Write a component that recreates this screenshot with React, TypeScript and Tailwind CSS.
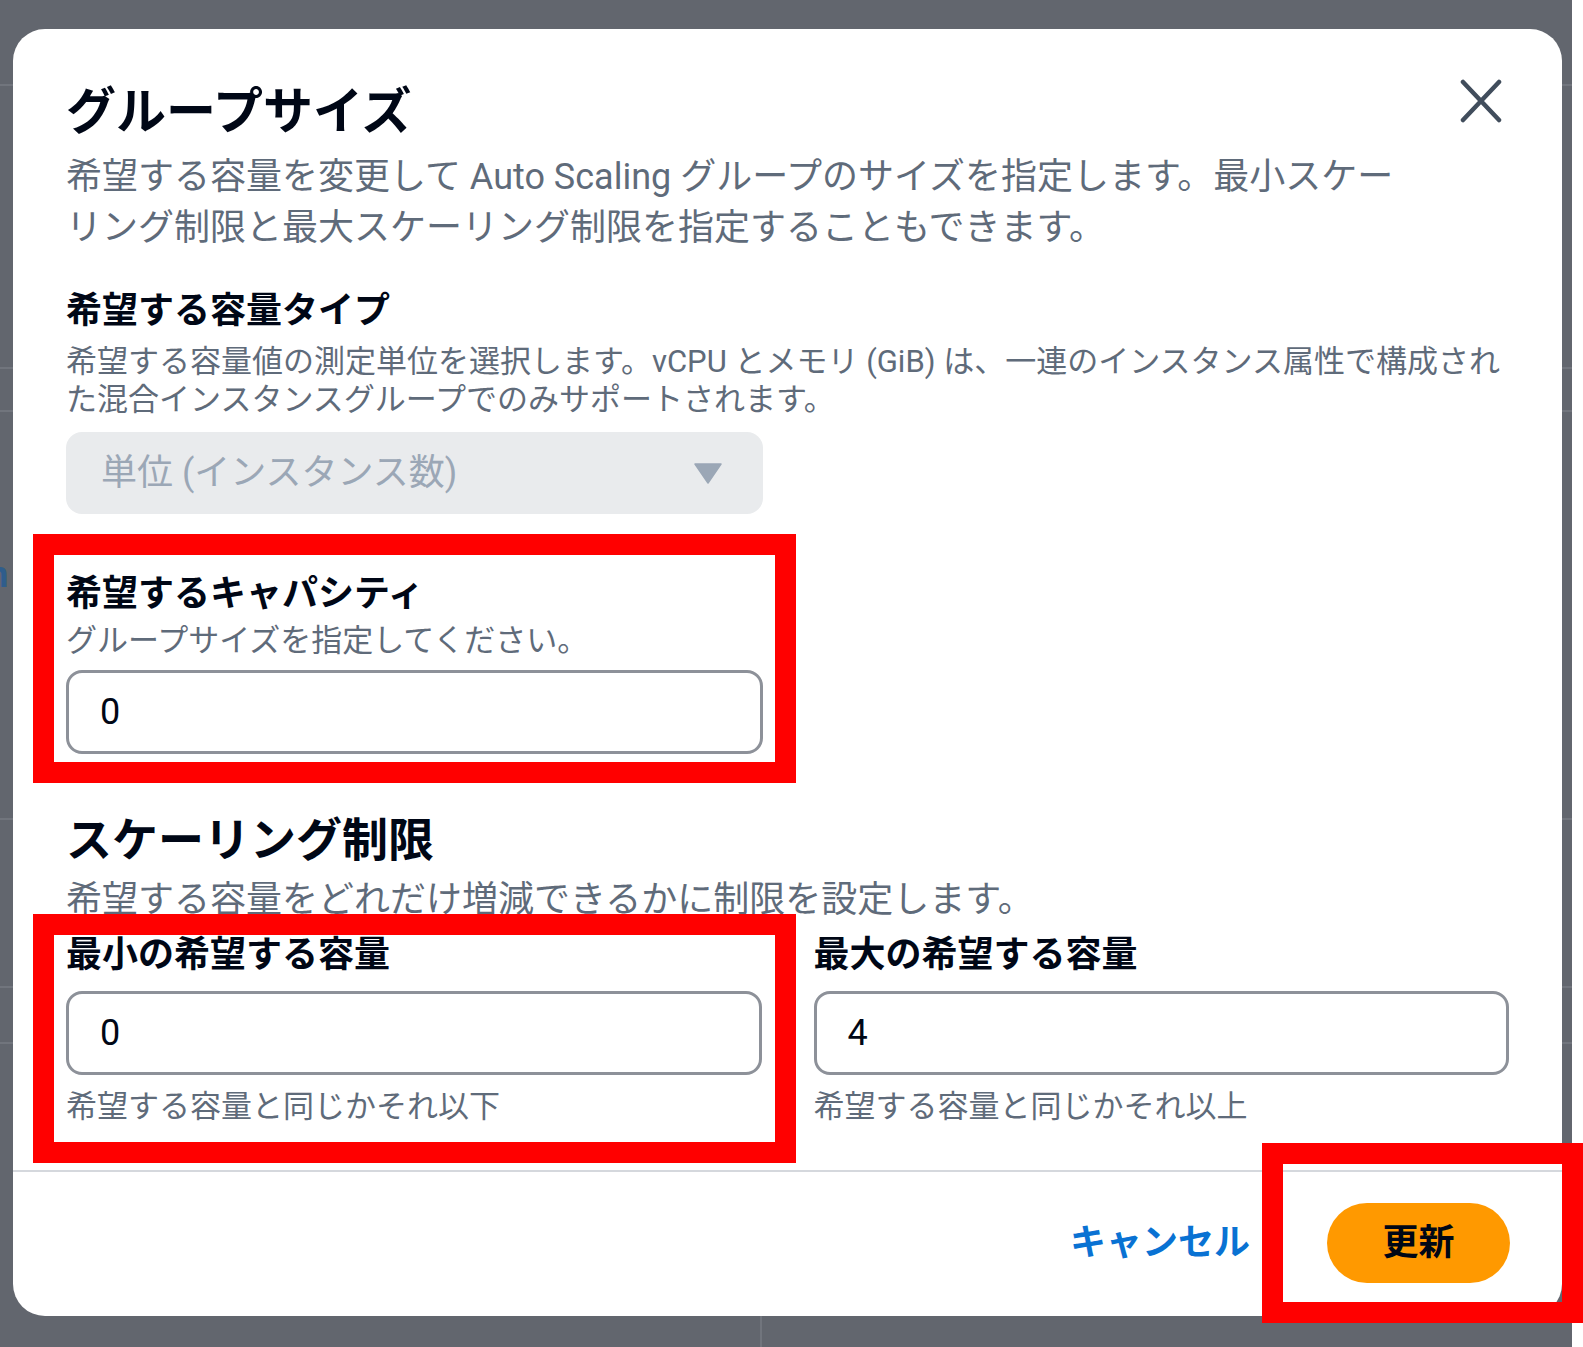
import React from "react";

const font = "font-['Roboto','Noto_Sans_CJK_JP',sans-serif]";

function CloseIcon() {
  return (
    <svg width="42" height="44" viewBox="0 0 42 44" fill="none">
      <path
        d="M3 3 L39 41 M39 3 L3 41"
        stroke="#414d5c"
        strokeWidth="4.5"
        strokeLinecap="round"
      />
    </svg>
  );
}

function Caret() {
  return (
    <svg width="28" height="21" viewBox="0 0 28 21">
      <path d="M1 1 H27 L14 20 Z" fill="#9ba7b6" stroke="#9ba7b6" strokeWidth="1.5" strokeLinejoin="round" />
    </svg>
  );
}

function TextBox({ value }: { value: string }) {
  return (
    <div className="h-[84px] w-full rounded-[16px] border-[3px] border-[#8d9199] bg-white pl-[31px] flex items-center text-[36px] text-[#000716]">
      {value}
    </div>
  );
}

function App() {
  return (
    <div className={`relative flex w-[1583px] h-[1347px] overflow-hidden bg-white ${font}`}>
      {/* page behind the overlay */}
      <div className="relative w-[1572px] h-full bg-[#62666e] flex flex-col">
        <div className="h-[86px] border-b-2 border-[#71757d]" />
        <div className="h-[283px] border-b-2 border-[#71757d]" />
        <div className="h-[43px] border-b-2 border-[#71757d]" />
        <div className="h-[408px] border-b-2 border-[#71757d]">
          <div className="pt-[136px] -ml-[12px] text-[36px] font-bold text-[#2f5d8c]">n</div>
        </div>
        <div className="h-[168px] border-b-2 border-[#71757d]" />
        <div className="h-[56px] border-b-2 border-[#71757d]" />
        <div className="flex-1 flex">
          <div className="w-[760px]" />
          <div className="flex-1 border-l-2 border-[#71757d]" />
        </div>

        {/* modal */}
        <div className="absolute left-[13px] top-[29px] w-[1549px] h-[1287px] bg-white rounded-[32px] flex flex-col">
          <div className="flex items-start justify-between pt-[50px] pl-[53px] pr-[60px]">
            <h1 className="mt-[3px] text-[50px] leading-[60px] font-bold text-[#000716]">グループサイズ</h1>
            <CloseIcon />
          </div>
          <div className="px-[53px]">
            <p className="mt-[10px] text-[36px] leading-[51px] text-[#5f6b7a] whitespace-nowrap">
              希望する容量を変更して Auto Scaling グループのサイズを指定します。最小スケー
              <br />
              リング制限と最大スケーリング制限を指定することもできます。
            </p>

            <div className="mt-[32px] text-[36px] leading-[51px] font-bold text-[#000716]">希望する容量タイプ</div>
            <p className="mt-[6px] text-[31px] leading-[38px] text-[#5f6b7a] whitespace-nowrap">
              希望する容量値の測定単位を選択します。vCPU とメモリ (GiB) は、一連のインスタンス属性で構成され
              <br />
              た混合インスタンスグループでのみサポートされます。
            </p>
            <div className="mt-[13px] w-[697px] h-[82px] rounded-[16px] bg-[#e9ebed] flex items-center justify-between pl-[35px] pr-[41px]">
              <span className="text-[36px] text-[#9ba7b6]">単位 (インスタンス数)</span>
              <Caret />
            </div>

            <div className="mt-[55px] text-[36px] leading-[51px] font-bold text-[#000716]">希望するキャパシティ</div>
            <p className="mt-[2px] text-[31px] leading-[38px] text-[#5f6b7a]">グループサイズを指定してください。</p>
            <div className="mt-[10px] w-[697px]">
              <TextBox value="0" />
            </div>

            <h2 className="mt-[58px] text-[46px] leading-[56px] font-bold text-[#000716]">スケーリング制限</h2>
            <p className="mt-[7px] text-[36px] leading-[51px] text-[#5f6b7a]">
              希望する容量をどれだけ増減できるかに制限を設定します。
            </p>

            <div className="mt-[4px] grid grid-cols-2 gap-x-[52px]">
              <div className="flex flex-col">
                <div className="text-[36px] leading-[51px] font-bold text-[#000716]">最小の希望する容量</div>
                <div className="mt-[10px]">
                  <TextBox value="0" />
                </div>
                <p className="mt-[13px] text-[31px] leading-[38px] text-[#5f6b7a]">希望する容量と同じかそれ以下</p>
              </div>
              <div className="flex flex-col">
                <div className="text-[36px] leading-[51px] font-bold text-[#000716]">最大の希望する容量</div>
                <div className="mt-[10px]">
                  <TextBox value="4" />
                </div>
                <p className="mt-[13px] text-[31px] leading-[38px] text-[#5f6b7a]">希望する容量と同じかそれ以上</p>
              </div>
            </div>
          </div>

          <div className="mt-[44px] h-[2px] bg-[#d5d8dd]" />

          <div className="flex items-center justify-end pt-[31px] pr-[52px]">
            <span className="mr-[77px] text-[36px] font-bold text-[#0972d3]">キャンセル</span>
            <div className="w-[183px] h-[80px] rounded-full bg-[#ff9900] flex items-center justify-center text-[36px] font-bold text-[#000716]">
              更新
            </div>
          </div>
        </div>
      </div>

      {/* annotation frames */}
      <div className="absolute left-[33px] top-[534px] w-[763px] h-[249px] border-[21px] border-[#ff0000]" />
      <div className="absolute left-[33px] top-[914px] w-[763px] h-[249px] border-[21px] border-[#ff0000]" />
      <div className="absolute left-[1262px] top-[1143px] w-[321px] h-[180px] border-[21px] border-[#ff0000]" />
    </div>
  );
}

export default App;
